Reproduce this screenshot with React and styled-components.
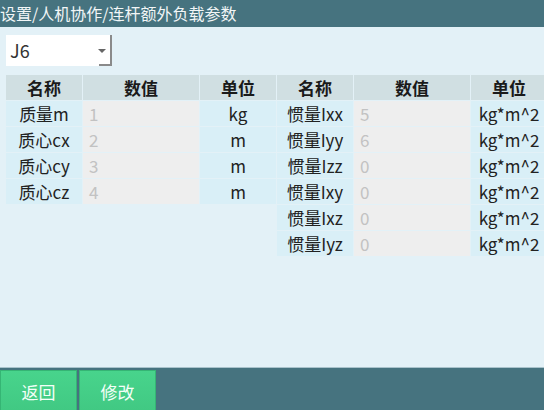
import React from "react";
import styled, { createGlobalStyle } from "styled-components";

const Global = createGlobalStyle`
  html, body { margin: 0; padding: 0; overflow: hidden; }
  body { font-family: "Noto Sans CJK SC", "Noto Sans", sans-serif; }
`;

const Screen = styled.div`
  width: 544px;
  height: 410px;
  display: flex;
  flex-direction: column;
  background: #e3f1f7;
  overflow: hidden;
`;

const Header = styled.div`
  height: 27px;
  background: #46737f;
  color: #f2f6f7;
  font-size: 16px;
  line-height: 27px;
  white-space: nowrap;
`;

const Content = styled.div`
  flex: 1;
  padding: 8px 0 0 6px;
  display: flex;
  flex-direction: column;
  gap: 9px;
  overflow: hidden;
`;

const Select = styled.div`
  position: relative;
  width: 106px;
  height: 31px;
  box-sizing: border-box;
  background: #ffffff;
  border-right: 2px solid #8a8a8a;
  font-size: 18px;
  line-height: 31px;
  color: #333;
  padding-left: 4px;
  &::after {
    content: "";
    position: absolute;
    right: 0;
    bottom: 0;
    width: 11px;
    height: 2px;
    background: #8a8a8a;
  }
`;

const Arrow = styled.span`
  position: absolute;
  right: 4px;
  top: 14px;
  width: 0;
  height: 0;
  border-left: 4px solid transparent;
  border-right: 4px solid transparent;
  border-top: 4px solid #666;
`;

const Tables = styled.div`
  display: flex;
  gap: 1px;
  align-items: flex-start;
`;

const Table = styled.div`
  display: grid;
  grid-template-columns: 76px 116px 76px;
  grid-auto-rows: 25px;
  gap: 1px;
  flex: none;
`;

const HeadCell = styled.div`
  background: #d0dfe2;
  color: #1a1a1a;
  font-weight: bold;
  font-size: 17px;
  line-height: 25px;
  text-align: center;
`;

const Cell = styled.div`
  background: ${(p) => (p.$value ? "#eeeeee" : "#d9eff7")};
  color: ${(p) => (p.$value ? "#c2c2c2" : "#222")};
  font-size: 17px;
  line-height: 26px;
  text-align: ${(p) => (p.$value ? "left" : "center")};
  padding-left: ${(p) => (p.$value ? "6px" : "0")};
  white-space: nowrap;
  overflow: hidden;
`;

const Footer = styled.div`
  height: 43px;
  background: #46737f;
  border-top: 1px solid #a9c3cc;
  box-sizing: border-box;
  display: flex;
  align-items: flex-end;
  gap: 2px;
`;

const Button = styled.div`
  width: 77px;
  height: 40px;
  box-sizing: border-box;
  background: linear-gradient(#48d48c, #41c983);
  border: 1px solid #35b574;
  border-bottom: none;
  color: #f4fff8;
  font-size: 17px;
  display: flex;
  align-items: center;
  justify-content: center;
  padding-top: 1px;
`;

const leftRows = [
  ["质量m", "1", "kg"],
  ["质心cx", "2", "m"],
  ["质心cy", "3", "m"],
  ["质心cz", "4", "m"],
];

const rightRows = [
  ["惯量Ixx", "5", "kg*m^2"],
  ["惯量Iyy", "6", "kg*m^2"],
  ["惯量Izz", "0", "kg*m^2"],
  ["惯量Ixy", "0", "kg*m^2"],
  ["惯量Ixz", "0", "kg*m^2"],
  ["惯量Iyz", "0", "kg*m^2"],
];

function ParamTable({ rows }) {
  return (
    <Table>
      <HeadCell>名称</HeadCell>
      <HeadCell>数值</HeadCell>
      <HeadCell>单位</HeadCell>
      {rows.map(([n, v, u]) => (
        <React.Fragment key={n}>
          <Cell>{n}</Cell>
          <Cell $value>{v}</Cell>
          <Cell>{u}</Cell>
        </React.Fragment>
      ))}
    </Table>
  );
}

export default function App() {
  return (
    <Screen>
      <Global />
      <Header>设置/人机协作/连杆额外负载参数</Header>
      <Content>
        <Select>
          J6
          <Arrow />
        </Select>
        <Tables>
          <ParamTable rows={leftRows} />
          <ParamTable rows={rightRows} />
        </Tables>
      </Content>
      <Footer>
        <Button>返回</Button>
        <Button>修改</Button>
      </Footer>
    </Screen>
  );
}
